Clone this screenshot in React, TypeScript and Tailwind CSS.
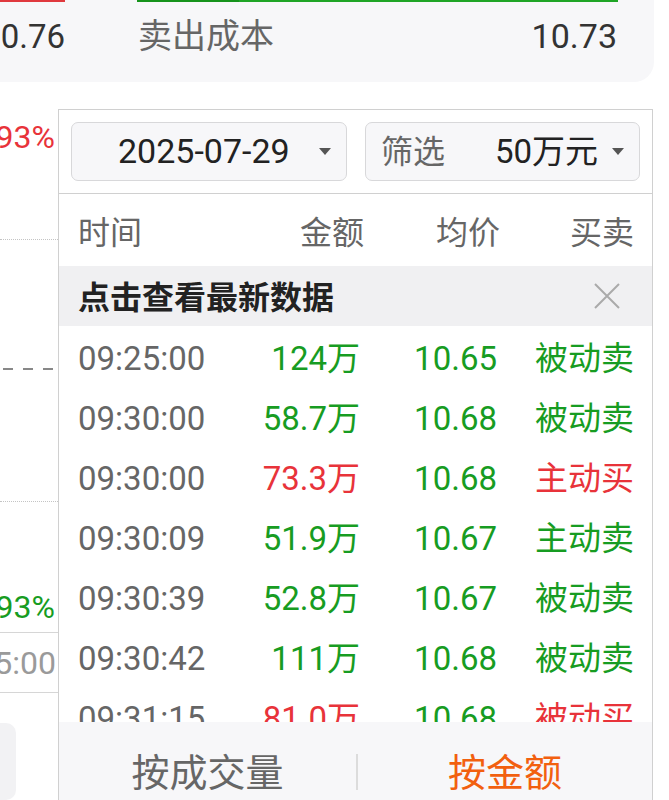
import React from "react";

const GREEN = "text-[#179c22]";
const RED = "text-[#e8333a]";

const ROWS = [
    { time: "09:25:00", amount: "124万", amountUp: false, price: "10.65", type: "被动卖", typeUp: false },
    { time: "09:30:00", amount: "58.7万", amountUp: false, price: "10.68", type: "被动卖", typeUp: false },
    { time: "09:30:00", amount: "73.3万", amountUp: true, price: "10.68", type: "主动买", typeUp: true },
    { time: "09:30:09", amount: "51.9万", amountUp: false, price: "10.67", type: "主动卖", typeUp: false },
    { time: "09:30:39", amount: "52.8万", amountUp: false, price: "10.67", type: "被动卖", typeUp: false },
    { time: "09:30:42", amount: "111万", amountUp: false, price: "10.68", type: "被动卖", typeUp: false },
    { time: "09:31:15", amount: "81.0万", amountUp: true, price: "10.68", type: "被动买", typeUp: true },
];

function Caret() {
    return (
        <svg width="12" height="7" viewBox="0 0 12 7" className="shrink-0">
            <path d="M0 0 L12 0 L6 7 Z" fill="#555" />
        </svg>
    );
}

export default function App() {
    return (
        <div className="w-[669px] h-[800px] bg-white overflow-hidden font-['Roboto','Noto_Sans_CJK_SC',sans-serif]">
            {/* 顶部成本卡片 */}
            <div className="w-[654px] h-[82px] bg-[#f7f7f9] rounded-br-[20px] flex flex-col">
                <div className="flex h-[2px]">
                    <div className="w-[65px] bg-[#e0393e]" />
                    <div className="w-[72px]" />
                    <div className="w-[102px] bg-[#16931c]" />
                    <div className="w-[379px] bg-[#1fa526]" />
                </div>
                <div className="flex items-center h-[72px] pb-[4px] text-[33px] leading-none">
                    <div className="w-[65px] overflow-hidden flex justify-end text-[#333]">
                        <span className="whitespace-nowrap">10.76</span>
                    </div>
                    <span className="ml-[73px] text-[#666] text-[34px]">卖出成本</span>
                    <span className="ml-auto mr-[37px] text-[#333] text-[34px]">10.73</span>
                </div>
            </div>

            <div className="flex mt-[27px] h-[691px]">
                {/* 左侧分时图残余 */}
                <div className="w-[58px] flex flex-col text-[32px] leading-none">
                    <div className="h-[56px] overflow-hidden flex items-center justify-end pr-[3px]">
                        <span className={`${RED} whitespace-nowrap`}>+0.93%</span>
                    </div>
                    <div className="h-[75px] border-b border-dotted border-[#c4c4c4]" />
                    <div className="h-[130px] flex items-end gap-[10px] pl-[3px]">
                        <div className="w-[10px] h-[2px] bg-[#888]" />
                        <div className="w-[10px] h-[2px] bg-[#888]" />
                        <div className="w-[10px] h-[2px] bg-[#888]" />
                    </div>
                    <div className="h-[132px] border-b border-dotted border-[#c4c4c4]" />
                    <div className="h-[131px] overflow-hidden flex items-end justify-end pr-[3px] pb-[9px] border-b border-[#d6d6d6]">
                        <span className={`${GREEN} whitespace-nowrap`}>-0.93%</span>
                    </div>
                    <div className="h-[60px] overflow-hidden flex items-center justify-end pr-[2px] border-b border-[#d6d6d6]">
                        <span className="text-[#9a9a9a] whitespace-nowrap">15:00</span>
                    </div>
                    <div className="h-[30px]" />
                    <div className="flex-1 w-[16px] bg-[#f2f2f4] rounded-r-[10px]" />
                </div>

                {/* 右侧大单明细 */}
                <div className="w-[595px] flex flex-col border-t border-l border-r border-[#d0d0d0] overflow-hidden">
                    <div className="flex gap-[18px] px-[12px] pt-[12px] pb-[12px] border-b border-[#d0d0d0]">
                        <div className="w-[276px] h-[59px] flex items-center bg-[#f7f7f9] border border-[#d8d8da] rounded-[7px] pl-[46px] pr-[15px]">
                            <span className="text-[34px] text-[#222]">2025-07-29</span>
                            <span className="ml-auto"><Caret /></span>
                        </div>
                        <div className="w-[275px] h-[59px] flex items-center bg-[#f7f7f9] border border-[#d8d8da] rounded-[7px] pl-[15px] pr-[15px]">
                            <span className="text-[32px] text-[#666]">筛选</span>
                            <span className="ml-[50px] text-[33px] text-[#222]">50万元</span>
                            <span className="ml-auto"><Caret /></span>
                        </div>
                    </div>

                    <div className="h-[72px] shrink-0 flex items-center pt-[5px] pl-[19px] text-[32px] text-[#666]">
                        <div className="w-[142px]">时间</div>
                        <div className="w-[144px] text-right">金额</div>
                        <div className="w-[136px] text-right">均价</div>
                        <div className="w-[134px] text-right">买卖</div>
                    </div>

                    <div className="h-[60px] shrink-0 flex items-center pt-[3px] bg-[#f0f0f2] pl-[19px] pr-[32px]">
                        <span className="text-[32px] font-bold text-[#222]">点击查看最新数据</span>
                        <svg width="26" height="26" viewBox="0 0 26 26" className="ml-auto -mt-[3px]">
                            <path d="M1 1 L25 25 M25 1 L1 25" stroke="#aaa" strokeWidth="2" />
                        </svg>
                    </div>

                    <div className="flex-1 overflow-hidden">
                        {ROWS.map((r, i) => (
                            <div key={i} className="h-[60px] flex items-center pt-[4px] pl-[19px] text-[33px] leading-none">
                                <div className="w-[142px] text-[#666]">{r.time}</div>
                                <div className={`w-[140px] text-right ${r.amountUp ? RED : GREEN}`}>{r.amount}</div>
                                <div className={`w-[137px] text-right ${GREEN}`}>{r.price}</div>
                                <div className={`w-[137px] text-right ${r.typeUp ? RED : GREEN}`}>{r.type}</div>
                            </div>
                        ))}
                    </div>

                    <div className="h-[78px] shrink-0 flex items-start pt-[32px] bg-[#f7f7f9] text-[38px] leading-none">
                        <div className="w-[297px] flex justify-center text-[#666]">按成交量</div>
                        <div className="w-[2px] h-[36px] bg-[#dcdcdc]" />
                        <div className="flex-1 flex justify-center text-[#f2600f]">按金额</div>
                    </div>
                </div>
            </div>
        </div>
    );
}
